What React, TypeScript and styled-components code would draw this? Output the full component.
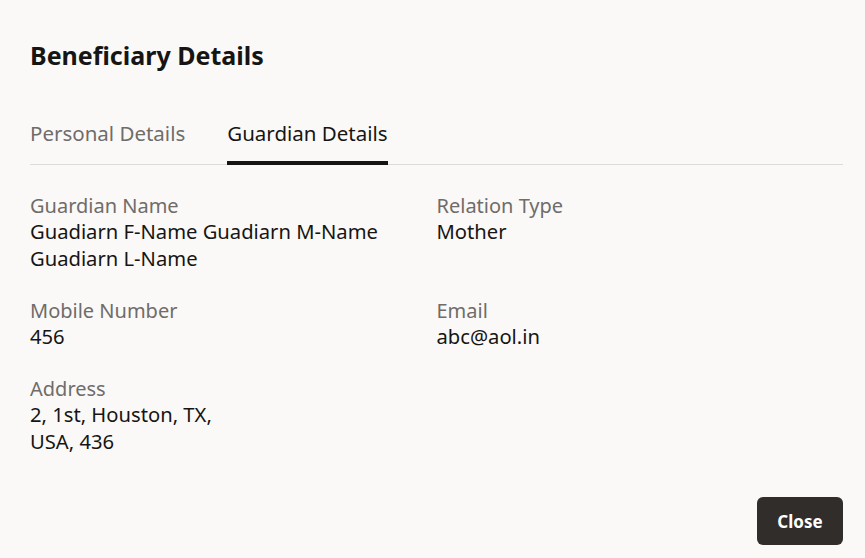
import styled, {createGlobalStyle} from "styled-components";

const GlobalStyle = createGlobalStyle`
  html, body {
    margin: 0;
    padding: 0;
    background: #faf9f8;
  }
  body {
    font-family: "Noto Sans", "Open Sans", sans-serif;
    color: #161513;
  }
`

const Dialog = styled.div`
  width: 865px;
  height: 558px;
  box-sizing: border-box;
  padding: 38px 22px 13px 30px;
  display: flex;
  flex-direction: column;
`

const Title = styled.h1`
  margin: 0;
  font-size: 25px;
  line-height: 34px;
  font-weight: 700;
  color: #161513;
`

const TabBar = styled.div`
  display: flex;
  gap: 42px;
  margin-top: 47px;
  border-bottom: 1px solid #dedcda;
`

const Tab = styled.div<{ $active?: boolean }>`
  font-size: 20.5px;
  line-height: 28px;
  padding-bottom: 14px;
  color: ${p => p.$active ? "#161513" : "#6f6c6a"};
  border-bottom: 4px solid ${p => p.$active ? "#161513" : "transparent"};
  margin-bottom: -1px;
`

const Fields = styled.div`
  display: grid;
  grid-template-columns: 1fr 1fr;
  row-gap: 28px;
  margin-top: 30px;
`

const Field = styled.div`
  display: flex;
  flex-direction: column;
`

const Label = styled.div`
  font-size: 20px;
  line-height: 24px;
  color: #6f6c6a;
  margin-top: -1px;
`

const Value = styled.div`
  font-size: 20.2px;
  line-height: 27px;
  color: #161513;
`

const Footer = styled.div`
  margin-top: auto;
  display: flex;
  justify-content: flex-end;
`

const CloseButton = styled.button`
  width: 86px;
  height: 48px;
  border: none;
  border-radius: 6px;
  background: #312d2a;
  color: #ffffff;
  font-family: inherit;
  font-size: 17px;
  font-weight: 700;
  cursor: pointer;
`

const fields = [
    {label: "Guardian Name", value: ["Guadiarn F-Name Guadiarn M-Name", "Guadiarn L-Name"]},
    {label: "Relation Type", value: ["Mother"]},
    {label: "Mobile Number", value: ["456"]},
    {label: "Email", value: ["abc@aol.in"]},
    {label: "Address", value: ["2, 1st, Houston, TX,", "USA, 436"]},
]

function App() {
    return <>
        <GlobalStyle/>
        <Dialog>
            <Title>Beneficiary Details</Title>
            <TabBar>
                <Tab>Personal Details</Tab>
                <Tab $active>Guardian Details</Tab>
            </TabBar>
            <Fields>
                {fields.map(f => <Field key={f.label}>
                    <Label>{f.label}</Label>
                    {f.value.map(line => <Value key={line}>{line}</Value>)}
                </Field>)}
            </Fields>
            <Footer>
                <CloseButton>Close</CloseButton>
            </Footer>
        </Dialog>
    </>
}

export default App
